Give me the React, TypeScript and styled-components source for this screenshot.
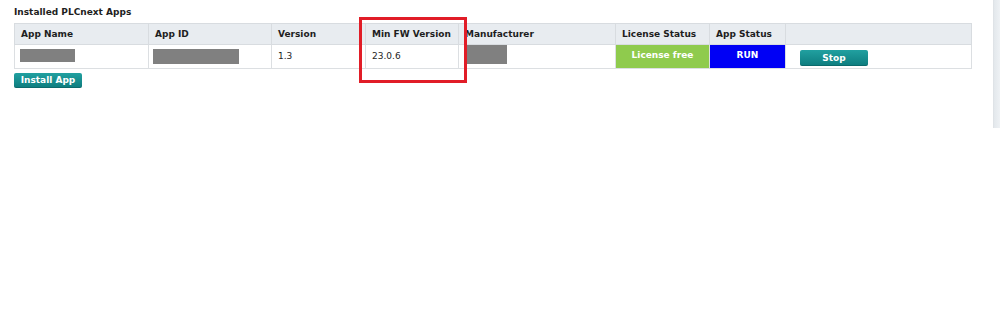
import React from "react"
import styled, { createGlobalStyle } from "styled-components"

const GlobalStyle = createGlobalStyle`
  html, body {
    margin: 0;
    padding: 0;
    background: #ffffff;
  }
  body {
    font-family: "DejaVu Sans", Verdana, sans-serif;
    color: #1e1e1e;
  }
`

type Column = { title: string; width: number }

const columns: Column[] = [
  { title: "App Name", width: 134 },
  { title: "App ID", width: 123 },
  { title: "Version", width: 94 },
  { title: "Min FW Version", width: 93 },
  { title: "Manufacturer", width: 157 },
  { title: "License Status", width: 94 },
  { title: "App Status", width: 76 },
  { title: "", width: 186 },
]

const App: React.FC = () => {
  return (
    <Page>
      <GlobalStyle />
      <Main>
        <Title>Installed PLCnext Apps</Title>
        <TableWrap>
          <Table>
            <colgroup>
              {columns.map((c, i) => (
                <col key={i} style={{ width: c.width }} />
              ))}
            </colgroup>
            <thead>
              <tr>
                {columns.map((c, i) => (
                  <Th key={i}>{c.title}</Th>
                ))}
              </tr>
            </thead>
            <tbody>
              <tr>
                <Td>
                  <Redact $w={55} $h={13} $top={4} />
                </Td>
                <Td>
                  <Redact $w={86} $h={15} $top={4} $left={-2} />
                </Td>
                <Td>1.3</Td>
                <Td>23.0.6</Td>
                <Td>
                  <Redact $w={43} $h={19} $top={0} />
                </Td>
                <StatusCell $bg="#8fcb4d">License free</StatusCell>
                <StatusCell $bg="#0000f5">RUN</StatusCell>
                <Td>
                  <ActionButton $width={68} $height={16} $offset={8}>
                    Stop
                  </ActionButton>
                </Td>
              </tr>
            </tbody>
          </Table>
          <Highlight />
        </TableWrap>
        <ActionButton $width={68} $height={15}>
          Install App
        </ActionButton>
      </Main>
      <Scrollbar />
    </Page>
  )
}

const Page = styled.div`
  display: flex;
  align-items: flex-start;
  width: 1000px;
  height: 328px;
`

const Main = styled.div`
  flex: 1;
  padding: 6px 0 0 14px;
`

const Title = styled.div`
  font-size: 9px;
  font-weight: 700;
  line-height: 12px;
  margin-bottom: 5px;
`

const TableWrap = styled.div`
  position: relative;
  width: 957px;
`

const Table = styled.table`
  width: 957px;
  border-collapse: collapse;
  table-layout: fixed;
  font-size: 9px;
  margin-bottom: 4px;
`

const Th = styled.th`
  height: 20px;
  padding: 0 6px;
  text-align: left;
  font-weight: 700;
  background: #e8ecf0;
  border: 1px solid #d8dce0;
  white-space: nowrap;
  overflow: hidden;
`

const Td = styled.td`
  height: 23px;
  padding: 0 6px;
  vertical-align: top;
  line-height: 22px;
  border: 1px solid #dcdfe2;
  white-space: nowrap;
`

const StatusCell = styled.td<{ $bg: string }>`
  height: 23px;
  padding: 0;
  vertical-align: top;
  line-height: 20px;
  text-align: center;
  font-weight: 700;
  color: #ffffff;
  background: ${(p) => p.$bg};
  border: 1px solid #dcdfe2;
`

const Redact = styled.span<{ $w: number; $h: number; $top: number; $left?: number }>`
  display: block;
  width: ${(p) => p.$w}px;
  height: ${(p) => p.$h}px;
  margin-top: ${(p) => p.$top}px;
  margin-left: ${(p) => p.$left ?? -1}px;
  background: #808080;
`

const ActionButton = styled.button<{ $width: number; $height: number; $offset?: number }>`
  display: block;
  width: ${(p) => p.$width}px;
  height: ${(p) => p.$height}px;
  margin: ${(p) => (p.$offset ? `5px 0 0 ${p.$offset}px` : "0")};
  padding: 0;
  border: none;
  border-radius: 2px;
  background: linear-gradient(#21a0a0, #0d7c7e);
  box-shadow: inset 0 -1px 0 rgba(0, 0, 0, 0.15);
  color: #ffffff;
  font-family: "DejaVu Sans", Verdana, sans-serif;
  font-size: 9px;
  font-weight: 700;
  line-height: ${(p) => p.$height}px;
  text-align: center;
`

const Highlight = styled.div`
  position: absolute;
  left: 345px;
  top: -6px;
  width: 102px;
  height: 60px;
  border: 3.5px solid #e11d27;
  pointer-events: none;
`

const Scrollbar = styled.div`
  flex: none;
  width: 6px;
  height: 128px;
  border-left: 1px solid #dfe3e7;
  background: linear-gradient(90deg, #e3e8ec, #eef1f4);
`

export default App
